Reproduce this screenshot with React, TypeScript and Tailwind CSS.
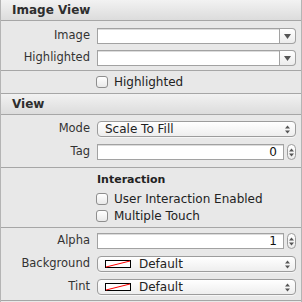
import type { ReactNode } from "react";

const font = "font-['DejaVu_Sans',sans-serif]";

function Header({ title }: { title: string }) {
  return (
    <div className="h-[22px] flex items-center pl-[11px] bg-gradient-to-b from-[#f2f2f2] to-[#dcdcdc] border-y border-[#a6a6a6] text-[12px] font-bold text-[#2e2e2e]">
      {title}
    </div>
  );
}

function Row({ label, children }: { label: string; children: ReactNode }) {
  return (
    <div className="flex items-center h-[16px]">
      <div className="w-[90px] text-right text-[11.5px] text-[#333] pr-[1px]">{label}</div>
      <div className="ml-[6px] w-[199px] h-[16px]">{children}</div>
    </div>
  );
}

function Combo() {
  return (
    <div className="flex h-full">
      <div className="flex-1 bg-white border border-[#a2a2a2] shadow-[inset_0_1px_0_#dcdcdc]" />
      <div className="w-[16px] flex items-center justify-center border border-l-0 border-[#a2a2a2] rounded-r-[4px] bg-gradient-to-b from-[#ffffff] to-[#ececec]">
        <svg width="7" height="5" viewBox="0 0 7 5">
          <path d="M0 0 H7 L3.5 5 Z" fill="#555" />
        </svg>
      </div>
    </div>
  );
}

function UpDown() {
  return (
    <svg width="5" height="9" viewBox="0 0 5 9">
      <path d="M0 3.5 L2.5 0.5 L5 3.5 Z" fill="#555" />
      <path d="M0 5.5 L2.5 8.5 L5 5.5 Z" fill="#555" />
    </svg>
  );
}

function Popup({ children }: { children: ReactNode }) {
  return (
    <div className="flex items-center h-full border border-[#9c9c9c] rounded-[4px] bg-gradient-to-b from-[#ffffff] to-[#eeeeee] shadow-[0_1px_0_#f6f6f6] text-[12px] text-[#222]">
      <div className="flex-1 flex items-center pl-[7px]">{children}</div>
      <div className="w-[16px] flex justify-center">
        <UpDown />
      </div>
    </div>
  );
}

function NumberField({ value }: { value: string }) {
  return (
    <div className="flex h-full">
      <div className="flex-1 flex items-center justify-end pr-[6px] bg-white border border-[#a2a2a2] shadow-[inset_0_1px_0_#dcdcdc] text-[12px] text-[#111]">
        {value}
      </div>
      <div className="ml-[3px] w-[9px] flex items-center justify-center border border-[#9c9c9c] rounded-[5px] bg-gradient-to-b from-[#ffffff] to-[#ececec]">
        <UpDown />
      </div>
    </div>
  );
}

function ColorWell() {
  return (
    <div className="flex items-center">
      <svg width="26" height="8" viewBox="0 0 26 8" className="mr-[8px]">
        <rect x="0.5" y="0.5" width="25" height="7" fill="#fff" stroke="#000" />
        <line x1="1" y1="7" x2="25" y2="1" stroke="#f00" strokeWidth="1" />
      </svg>
      Default
    </div>
  );
}

function Check({ label }: { label: string }) {
  return (
    <div className="flex items-center h-[17px] pl-[95px]">
      <div className="w-[12px] h-[12px] rounded-[3px] border border-[#8e8e8e] bg-gradient-to-b from-[#ffffff] to-[#e9e9e9]" />
      <span className="ml-[6px] text-[12px] text-[#222]">{label}</span>
    </div>
  );
}

export default function App() {
  return (
    <div className={`${font} w-[302px] h-[302px] bg-[#e8e8e8] border-x border-[#b4b4b4] overflow-hidden`}>
      <div className="-mt-px">
        <Header title="Image View" />
      </div>

      <div className="flex flex-col gap-[6px] pt-[7px] pb-[4px] border-b border-[#a6a6a6]">
        <Row label="Image">
          <Combo />
        </Row>
        <Row label="Highlighted">
          <Combo />
        </Row>
      </div>

      <div className="h-[22px] flex items-center">
        <Check label="Highlighted" />
      </div>

      <Header title="View" />

      <div className="flex flex-col gap-[7px] pt-[6px] pb-[7px] border-b border-[#a6a6a6]">
        <Row label="Mode">
          <Popup>Scale To Fill</Popup>
        </Row>
        <Row label="Tag">
          <NumberField value="0" />
        </Row>
      </div>

      <div className="pt-[5px] pb-[3px] border-b border-[#a6a6a6]">
        <div className="pl-[96px] h-[14px] flex items-center text-[11px] font-bold text-[#222]">Interaction</div>
        <div className="mt-[3px]">
          <Check label="User Interaction Enabled" />
        </div>
        <Check label="Multiple Touch" />
      </div>

      <div className="flex flex-col gap-[7px] pt-[5px] pb-[5px] border-b border-[#a6a6a6]">
        <Row label="Alpha">
          <NumberField value="1" />
        </Row>
        <Row label="Background">
          <Popup>
            <ColorWell />
          </Popup>
        </Row>
        <Row label="Tint">
          <Popup>
            <ColorWell />
          </Popup>
        </Row>
      </div>
    </div>
  );
}
